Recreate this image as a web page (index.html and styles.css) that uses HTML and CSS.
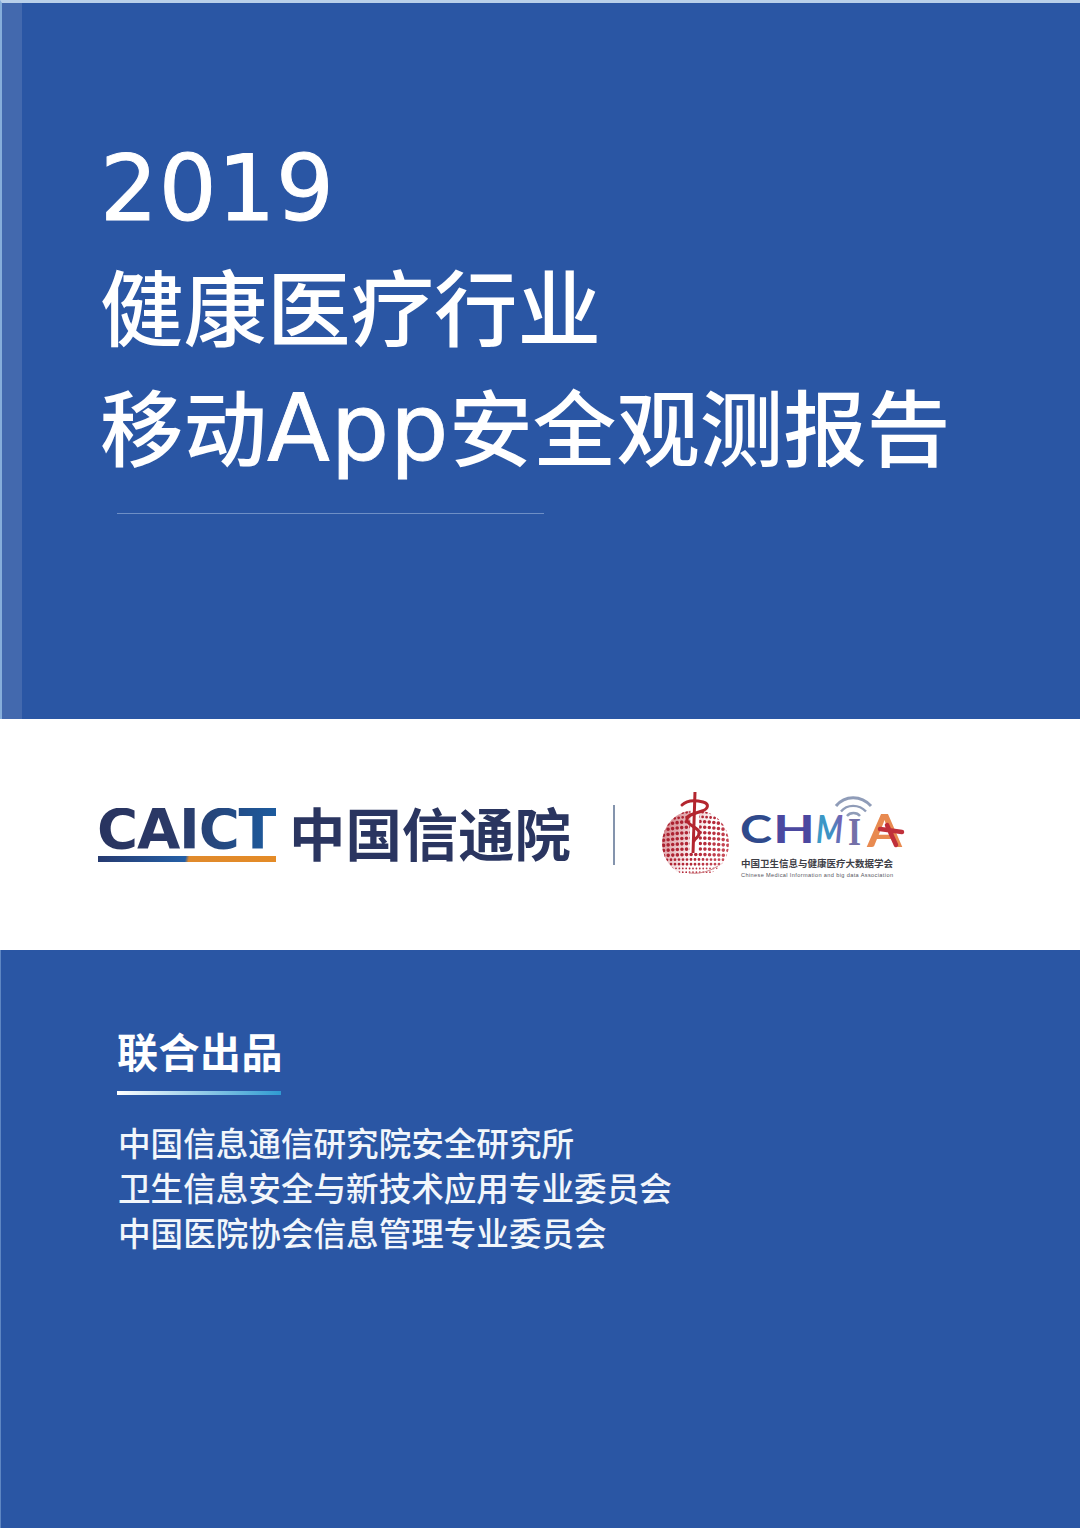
FILE: index.html
```html
<!DOCTYPE html>
<html lang="zh-CN">
<head>
<meta charset="utf-8">
<title>2019 健康医疗行业移动App安全观测报告</title>
<link rel="stylesheet" href="styles.css">
</head>
<body>
<main class="cover">
  <section class="hero">
    <div class="spine"></div>
    <div class="hero-body">
      <h1 class="title">
        <span class="title-year">2019</span>
        <span class="title-line">健康医疗行业</span>
        <span class="title-line">移动<span class="title-latin">App</span>安全观测报告</span>
      </h1>
      <div class="rule"></div>
    </div>
  </section>

  <section class="logos">
    <div class="caict">
      <div class="caict-mark">CAICT</div>
      <div class="caict-bar"></div>
    </div>
    <div class="caict-name">中国信通院</div>
    <div class="logo-divider"></div>
    <svg class="chmia" viewBox="655 785 255 100" aria-label="CHMIA">
      <defs>
        <clipPath id="globe"><circle cx="696.5" cy="843.5" r="33.5"/></clipPath>
        <linearGradient id="globeInk" gradientUnits="userSpaceOnUse" x1="663" y1="825" x2="730" y2="860">
          <stop offset="0" stop-color="#a81f2e"/>
          <stop offset="0.6" stop-color="#b52a3a"/>
          <stop offset="1" stop-color="#cc5662"/>
        </linearGradient>
        <linearGradient id="globeWash" gradientUnits="userSpaceOnUse" x1="663" y1="825" x2="700" y2="845">
          <stop offset="0" stop-color="#b5232f" stop-opacity="0.6"/>
          <stop offset="1" stop-color="#b5232f" stop-opacity="0"/>
        </linearGradient>
        <linearGradient id="mInk" gradientUnits="userSpaceOnUse" x1="818" y1="0" x2="843" y2="0">
          <stop offset="0" stop-color="#3b9cc8"/>
          <stop offset="0.6" stop-color="#3f8fc2"/>
          <stop offset="1" stop-color="#7a5bb0"/>
        </linearGradient>
      </defs>
      <circle class="globe-wash" cx="696.5" cy="843.5" r="33.500" fill="url(#globeWash)"/>
      <g clip-path="url(#globe)" class="dots" stroke="url(#globeInk)">
        <path class="d1" d="M660 813 Q697 803 734 813"/>
        <path class="d2" d="M660 817 Q697 807 734 817"/>
        <path class="d2" d="M660 821.500 Q697 812 734 821.500"/>
        <path class="d3" d="M660 826 Q697 817 734 826"/>
        <path class="d3" d="M660 831 Q697 823 734 831"/>
        <path class="d3" d="M660 836 Q697 829 734 836"/>
        <path class="d3" d="M660 841 Q697 835 734 841"/>
        <path class="d3" d="M660 846 Q697 841 734 846"/>
        <path class="d3" d="M660 851 Q697 847 734 851"/>
        <path class="d3" d="M660 856 Q697 853 734 856"/>
        <path class="d2" d="M660 860 Q697 859 734 860"/>
        <path class="d2" d="M660 864 Q697 864.500 734 864"/>
        <path class="d1" d="M660 868 Q697 869 734 868"/>
        <path class="d1" d="M660 871.500 Q697 873 734 871.500"/>
      </g>
      <path class="wave" d="M690 873 Q705 875 719 866"/>
      <path class="snake-halo" d="M696 810 L695 853"/>
      <path class="staff" d="M696 792 L694 853"/>
      <path class="snake" d="M683 805 C688 800 696 800 704 802 C711 804 709 809 703 811 C695 814 687 815 688 820 C689 826 699 827 700 832 C701 837 696 838 695 841"/>

      <path class="wifi wifi-outer" d="M837 806 C846 795 862 795 872 806"/>
      <path class="wifi" d="M842 811.500 C848 804 860 804 867 811.500"/>
      <path class="wifi" d="M848 816 C851 812 858 812 861 816"/>

      <text class="letter l-c" x="741" y="843" textLength="32" lengthAdjust="spacingAndGlyphs">C</text>
      <text class="letter l-h" x="774" y="843" textLength="42" lengthAdjust="spacingAndGlyphs">H</text>
      <text class="letter l-m" x="817" y="843" textLength="27" lengthAdjust="spacingAndGlyphs" fill="url(#mInk)">M</text>
      <text class="letter l-i" x="849" y="845" textLength="13" lengthAdjust="spacingAndGlyphs">I</text>
      <text class="letter l-a" x="868" y="847" textLength="35" lengthAdjust="spacingAndGlyphs">A</text>
      <path class="a-cross" d="M881 829 L903 832 M888 825 L897 845"/>
      <text class="chmia-cn" x="742" y="867">中国卫生信息与健康医疗大数据学会</text>
      <text class="chmia-en" x="742" y="876.500" textLength="152">Chinese  Medical Information and big data Association</text>
    </svg>
  </section>

  <section class="credits">
    <h2 class="credits-title">联合出品</h2>
    <div class="credits-bar"></div>
    <ul class="credits-list">
      <li>中国信息通信研究院安全研究所</li>
      <li>卫生信息安全与新技术应用专业委员会</li>
      <li>中国医院协会信息管理专业委员会</li>
    </ul>
  </section>
</main>
</body>
</html>
```

FILE: styles.css
```css
* { box-sizing: border-box; }

html, body {
  margin: 0;
  padding: 0;
  background: #fff;
}

.cover {
  width: 1080px;
  height: 1528px;
  display: flex;
  flex-direction: column;
  overflow: hidden;
  font-family: "Noto Sans CJK SC", "Noto Sans", sans-serif;
}

.hero {
  height: 719px;
  display: flex;
  background: #2a56a4;
  border-top: 3px solid #b9d0ea;
  border-left: 2px solid #86aedb;
}

.spine {
  width: 20px;
  background: #4369ae;
}

.hero-body {
  flex: 1;
  padding: 121px 0 0 78px;
}

.title {
  margin: 0;
  display: flex;
  flex-direction: column;
  color: #fff;
  font-weight: 500;
  white-space: nowrap;
}

.title-year {
  height: 120px;
  line-height: 130px;
  font-family: "DejaVu Sans", sans-serif;
  font-size: 91px;
  font-weight: 400;
  letter-spacing: 0.800px;
  -webkit-text-stroke: 1px #fff;
}

.title-line {
  height: 120px;
  line-height: 120px;
  font-size: 83.500px;
}

.title-latin {
  font-family: "DejaVu Sans", sans-serif;
  font-size: 92px;
  font-weight: 400;
  letter-spacing: 0.800px;
  -webkit-text-stroke: 0.8px #fff;
}

.rule {
  width: 427px;
  height: 1px;
  margin: 29px 0 0 17px;
  background: #6e8fc6;
}

.logos {
  height: 231px;
  display: flex;
  align-items: center;
  padding-left: 98px;
  background: #fff;
}

.caict {
  width: 178px;
  display: flex;
  flex-direction: column;
  gap: 4px;
}

.caict-mark {
  height: 44px;
  line-height: 42px;
  font-family: "DejaVu Sans", sans-serif;
  font-weight: 700;
  font-size: 56px;
  letter-spacing: -1.200px;
  margin-left: -1px;
  white-space: nowrap;
  background: linear-gradient(95deg, #28335f 0%, #2b3a68 45%, #1c5ca0 100%);
  -webkit-background-clip: text;
  background-clip: text;
  color: transparent;
}

.caict-bar {
  height: 6px;
  background: linear-gradient(100deg, #263a70 0%, #245fa6 49%, #e08a2c 51%, #e48b27 100%);
}

.caict-name {
  margin: -6px 0 0 13px;
  font-size: 56.400px;
  line-height: 66px;
  font-weight: 700;
  color: #2a3560;
  white-space: nowrap;
}

.logo-divider {
  width: 2px;
  height: 60px;
  margin-left: 42px;
  background: #8494ad;
}

.chmia {
  width: 255px;
  height: 100px;
  margin-left: 39px;
  flex: none;
}

.dots path { fill: none; stroke-linecap: round; }
.dots .d1 { stroke-width: 1.8px; stroke-dasharray: 0 3.4; }
.dots .d2 { stroke-width: 2.8px; stroke-dasharray: 0 4; }
.dots .d3 { stroke-width: 3.6px; stroke-dasharray: 0 4.6; }

.wave { fill: none; stroke: #d08a8f; stroke-width: 1px; }
.staff { fill: none; stroke: #b3262f; stroke-width: 3px; }
.snake { fill: none; stroke: #b3262f; stroke-width: 3px; stroke-linecap: round; }
.snake-halo { fill: none; stroke: #fff; stroke-width: 9px; }

.wifi { fill: none; stroke: #8f9cb8; stroke-width: 2.4px; }
.wifi-outer { stroke-width: 3px; }

.letter {
  font-family: Lato, "Noto Sans", sans-serif;
  font-weight: 700;
  font-size: 39px;
}
.l-c { fill: #2f4a8c; }
.l-h { fill: #4b48a0; }
.l-m { font-style: italic; }
.l-i { font-family: "Liberation Serif", serif; font-size: 40px; fill: #7370a8; }
.l-a { fill: #e88a50; font-size: 46px; }
.a-cross { fill: none; stroke: #c0303a; stroke-width: 4.5px; stroke-linecap: round; }

.chmia-cn {
  font-size: 9.500px;
  font-weight: 700;
  fill: #3e3e46;
}

.chmia-en {
  font-family: "Liberation Sans", Arial, sans-serif;
  font-size: 5.600px;
  fill: #55555e;
}

.credits {
  flex: 1;
  background: #2a56a4;
  border-left: 1px solid #5e86c2;
  padding: 74px 0 0 116px;
  color: #fff;
}

.credits-title {
  margin: 0;
  font-size: 41px;
  line-height: 52px;
  font-weight: 700;
  letter-spacing: 0.500px;
  white-space: nowrap;
}

.credits-bar {
  width: 164px;
  height: 4px;
  margin-top: 15px;
  background: linear-gradient(90deg, #ffffff, #2f9bd2);
}

.credits-list {
  list-style: none;
  margin: 24px 0 0 1px;
  padding: 0;
  font-size: 32.600px;
  font-weight: 500;
  line-height: 45px;
  color: #f2f6fb;
  white-space: nowrap;
}
```
